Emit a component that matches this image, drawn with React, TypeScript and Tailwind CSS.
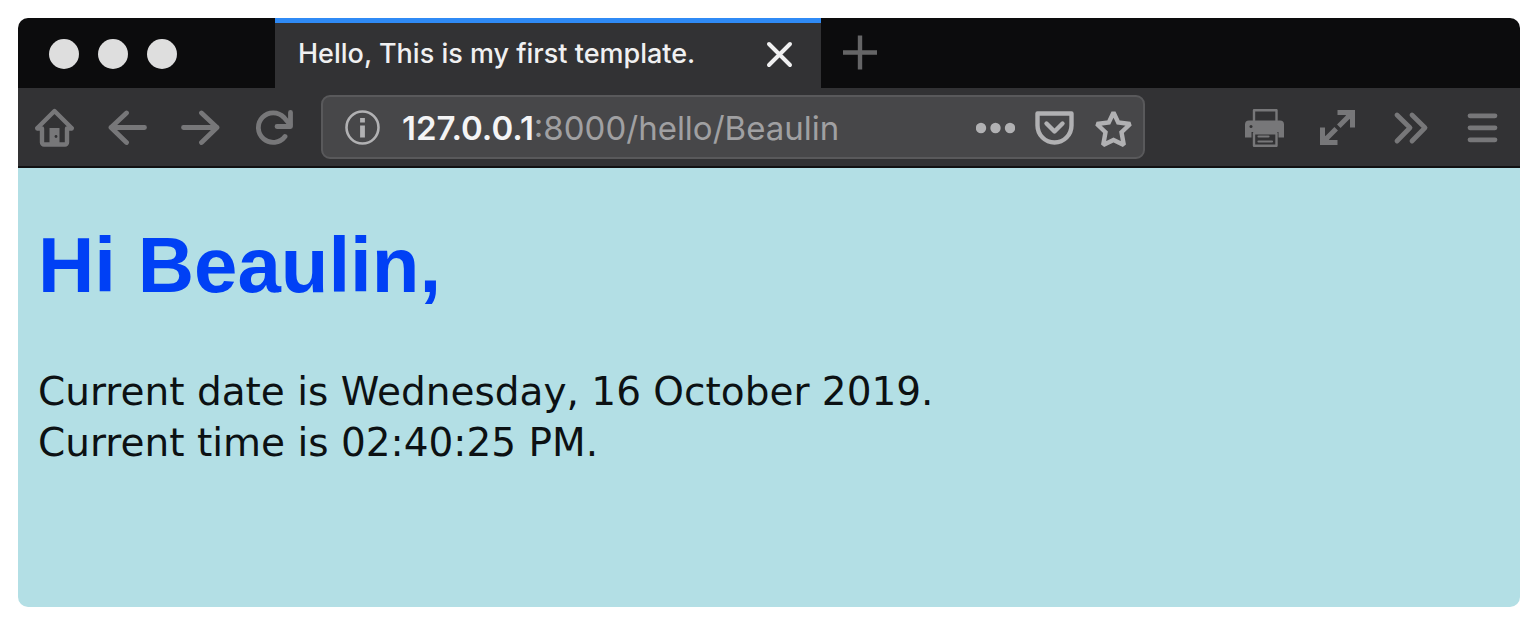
import { useState } from "react";
import type { ReactNode } from "react";

function Icon({ children }: { children: ReactNode }) {
  return (
    <svg
      viewBox="0 0 39 39"
      className="size-[39px]"
      fill="none"
      stroke="currentColor"
      strokeWidth="4.8"
      strokeLinecap="round"
      strokeLinejoin="round"
      aria-hidden="true"
    >
      {children}
    </svg>
  );
}

function IconButton({ label, children }: { label: string; children: ReactNode }) {
  return (
    <button type="button" aria-label={label} className="shrink-0">
      <Icon>{children}</Icon>
    </button>
  );
}

function TabBar() {
  return (
    <div className="flex h-[70px] bg-[#0c0c0d]">
      <div className="flex w-[257px] shrink-0 items-center gap-[19px] pt-[2px] pl-[31px]">
        <button type="button" aria-label="Close window" className="size-[30px] rounded-full bg-[#dedede]" />
        <button type="button" aria-label="Minimize window" className="size-[30px] rounded-full bg-[#dedede]" />
        <button type="button" aria-label="Zoom window" className="size-[30px] rounded-full bg-[#dedede]" />
      </div>
      <div className="flex w-[546px] items-center justify-between border-t-[5px] border-[#2f8af5] bg-[#323234] pr-[22px] pb-[3px] pl-[23px] text-[#f0f0f1]">
        <span className="font-['Inter',sans-serif] text-[27px] font-medium whitespace-nowrap">
          Hello, This is my first template.
        </span>
        <button type="button" aria-label="Close tab" className="shrink-0">
          <Icon>
            <path d="M9 9l21 21M30 9L9 30" strokeWidth="4" />
          </Icon>
        </button>
      </div>
      <button type="button" aria-label="New tab" className="ml-5 text-[#656566]">
        <Icon>
          <path d="M19 1.5v34M2 18.500h34" strokeWidth="4.4" strokeLinecap="butt" />
        </Icon>
      </button>
    </div>
  );
}

function AddressBar() {
  const [path, setPath] = useState(":8000/hello/Beaulin");
  return (
    <div className="mr-[66px] -ml-[6px] flex h-[64px] min-w-0 flex-1 items-center gap-5 rounded-[9px] border-2 border-[#59595b] bg-[#474749] pr-[10px] pl-5 text-[#b1b1b3]">
      <button type="button" aria-label="Site information" className="shrink-0">
        <Icon>
          <circle cx="19.5" cy="19.5" r="16" strokeWidth="2.6" />
          <path d="M19.5 10v4.6M19.5 17.5v12" strokeWidth="4.8" strokeLinecap="butt" />
        </Icon>
      </button>
      <div className="flex min-w-0 flex-1 items-center pt-1 font-['Inter',sans-serif] text-[33px]">
        <label htmlFor="address" className="shrink-0 font-semibold text-[#f4f4f5]">
          127.0.0.1
        </label>
        <input
          id="address"
          type="text"
          value={path}
          onChange={(e) => setPath(e.target.value)}
          className="w-full min-w-0 bg-transparent text-[#a0a0a2] outline-none"
        />
      </div>
      <IconButton label="Page actions">
        <g fill="currentColor" stroke="none">
          <circle cx="5" cy="20" r="5.2" />
          <circle cx="19.5" cy="20" r="5.2" />
          <circle cx="34" cy="20" r="5.2" />
        </g>
      </IconButton>
      <IconButton label="Save to Pocket">
        <path d="M2.5 5.5h34v12a17 17 0 0 1-34 0z" strokeWidth="4.4" />
        <path d="M11.500 15.500l8 8 8-8" strokeWidth="4.4" />
      </IconButton>
      <IconButton label="Bookmark this page">
        <path
          d="M19.5 4.500l4.700 10 12 1.500-8.700 8.200 2.300 12.800-10.300-5-10.300 5 2.300-12.800-8.700-8.200 12-1.500z"
          strokeWidth="4.4"
          strokeLinejoin="miter"
          strokeMiterlimit="2.2"
        />
      </IconButton>
    </div>
  );
}

function Toolbar() {
  return (
    <nav
      aria-label="Browser toolbar"
      className="flex h-[80px] items-center gap-[34px] border-b-2 border-[#111112] bg-[#323234] px-[17px] text-[#777779]"
    >
      <IconButton label="Home">
        <path d="M2.400 20L19.500 3l17.100 17" strokeWidth="4.4" />
        <path d="M2.400 20.500h4.600v14a2 2 0 0 0 2 2h21a2 2 0 0 0 2-2v-14h4.600" strokeWidth="4.4" />
        <path d="M14.500 36V20h10v16z" fill="currentColor" stroke="none" />
        <circle cx="21" cy="28.500" r="1.400" fill="#323234" stroke="none" />
      </IconButton>
      <IconButton label="Back">
        <path d="M36.5 19.5H3M18.5 5L3 19.5l15.5 15" />
      </IconButton>
      <IconButton label="Forward">
        <path d="M2.5 19.5H36M20.5 5L36 19.5l-15.5 15" />
      </IconButton>
      <IconButton label="Reload">
        <path d="M31 28.500a14.800 14.800 0 1 1-1-19l6 7" />
        <path d="M36.500 4.500v14H23" />
      </IconButton>
      <AddressBar />
      <IconButton label="Print">
        <path d="M9 13V2.200h22.500V13" strokeWidth="2.4" />
        <path
          d="M4 12.500h31a4 4 0 0 1 4 4v13h-5.500V24h-27v5.500H0v-13a4 4 0 0 1 4-4z"
          fill="currentColor"
          stroke="none"
        />
        <path d="M9 25.200v12.600h22.500V25.200z" strokeWidth="2.4" />
        <path d="M13.500 28.500h10M13.500 33.500h13.500" strokeWidth="2.2" />
        <circle cx="6" cy="18.500" r="1.500" fill="#323234" stroke="none" />
      </IconButton>
      <IconButton label="Full screen">
        <g strokeWidth="5" strokeLinejoin="miter" strokeLinecap="butt">
          <path d="M19.500 4.500H34.500V19.500M34.500 4.500L20.800 18.200" />
          <path d="M4.500 19.500V34.500H19.500M4.500 34.500L18.200 20.800" />
          <path d="M34.500 4.500l-8 1.500 6.500 6.500zM4.500 34.500l1.500-8 6.500 6.500z" fill="currentColor" stroke="none" />
        </g>
      </IconButton>
      <IconButton label="More tools">
        <path d="M6 7l13 12.800L6 33M21 7l13 12.800L21 33" />
      </IconButton>
      <IconButton label="Open menu">
        <path d="M6 7.800h25M6 19.800h25M6 31.800h25" />
      </IconButton>
    </nav>
  );
}

export default function App() {
  return (
    <div className="min-h-screen bg-white pt-[18px] pr-4 pb-[15px] pl-[18px]">
      <div className="overflow-hidden rounded-[10px]">
        <TabBar />
        <Toolbar />
        <main className="bg-[#b3dfe5] px-5 pt-[52px] pb-[139px]">
          <h1 className="font-['Liberation_Sans',Arial,sans-serif] text-[78px] leading-[90px] font-bold text-[#0040f5]">
            Hi Beaulin,
          </h1>
          <p className="mt-[56px] font-['DejaVu_Sans',Verdana,sans-serif] text-[39px] leading-[51px] text-[#0c1113]">
            Current date is Wednesday, 16 October 2019.
            <br />
            Current time is 02:40:25 PM.
          </p>
        </main>
      </div>
    </div>
  );
}
